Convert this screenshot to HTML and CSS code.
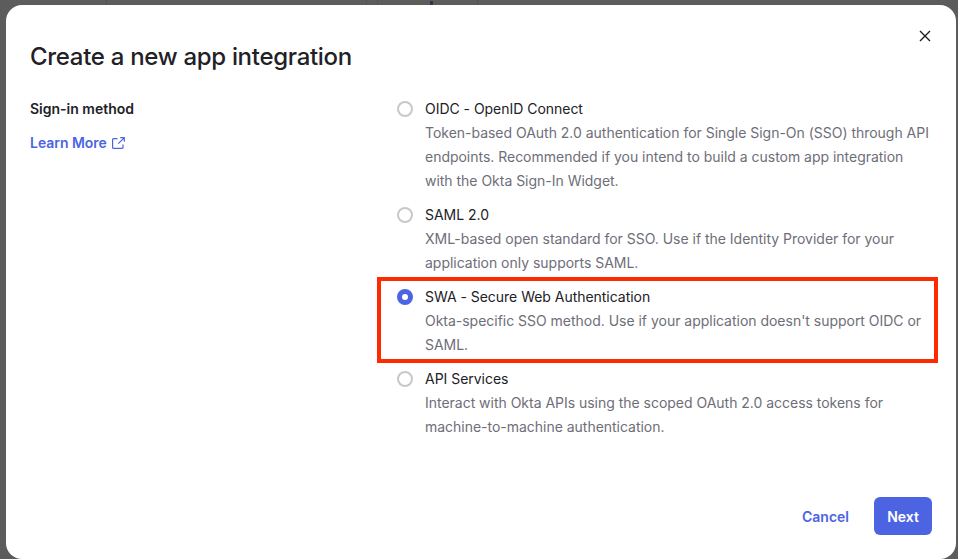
FILE: index.html
```html
<!DOCTYPE html>
<html lang="en">
<head>
<meta charset="utf-8">
<title>Create a new app integration</title>
<link rel="stylesheet" href="styles.css">
</head>
<body>
<div class="overlay">
  <div class="modal">
    <header class="modal-head">
      <h1 class="title">Create a new app integration</h1>
      <button class="close" aria-label="Close">
        <svg width="12" height="12" viewBox="0 0 12 12"><path d="M1 1l10 10M11 1L1 11" stroke="#1d1d21" stroke-width="1.4" fill="none"/></svg>
      </button>
    </header>
    <div class="modal-body">
      <div class="side">
        <div class="side-label">Sign-in method</div>
        <a class="learn">Learn More
          <svg class="ext" width="13" height="12" viewBox="0 0 13 12" fill="none" stroke="#4c64e1" stroke-width="1.2"><path d="M5.5 1.6H1.6a1 1 0 0 0-1 1v7.8a1 1 0 0 0 1 1h8.4a1 1 0 0 0 1-1V7.5"/><path d="M8.2 .7h4.1v4.1M12.3 .7L6.3 6.7"/></svg>
        </a>
      </div>
      <div class="options">
        <div class="option">
          <span class="radio"></span>
          <div>
            <div class="opt-title">OIDC - OpenID Connect</div>
            <div class="opt-desc">Token-based OAuth 2.0 authentication for Single Sign-On (SSO) through API<br>endpoints. Recommended if you intend to build a custom app integration<br>with the Okta Sign-In Widget.</div>
          </div>
        </div>
        <div class="option">
          <span class="radio"></span>
          <div>
            <div class="opt-title">SAML 2.0</div>
            <div class="opt-desc">XML-based open standard for SSO. Use if the Identity Provider for your<br>application only supports SAML.</div>
          </div>
        </div>
        <div class="option">
          <span class="radio selected"></span>
          <div>
            <div class="opt-title">SWA - Secure Web Authentication</div>
            <div class="opt-desc">Okta-specific SSO method. Use if your application doesn't support OIDC or<br>SAML.</div>
          </div>
          <span class="highlight"></span>
        </div>
        <div class="option">
          <span class="radio"></span>
          <div>
            <div class="opt-title">API Services</div>
            <div class="opt-desc">Interact with Okta APIs using the scoped OAuth 2.0 access tokens for<br>machine-to-machine authentication.</div>
          </div>
        </div>
      </div>
    </div>
    <footer class="modal-foot">
      <a class="cancel">Cancel</a>
      <button class="next">Next</button>
    </footer>
  </div>
</div>
</body>
</html>
```
FILE: styles.css
```css
* { box-sizing: border-box; }
html, body { margin: 0; height: 100%; }
body {
  background-color: #5c5c5c;
  background-image:
    linear-gradient(#525252, #525252),
    linear-gradient(#525252, #525252),
    linear-gradient(#525252, #525252),
    linear-gradient(#525252, #525252),
    linear-gradient(#2f3548, #2f3548);
  background-size: 1px 5px, 1px 5px, 1px 5px, 1px 5px, 3px 4px;
  background-position: 106px 0, 366px 0, 377px 0, 477px 0, 430px 1px;
  background-repeat: no-repeat;
  font-family: Inter, "Liberation Sans", sans-serif;
  overflow: hidden;
}
.overlay {
  height: 559px;
  padding: 5px 2px 0 6px;
  display: flex;
}
.modal {
  flex: 1;
  background: #fff;
  border-radius: 16px;
  padding: 0 24px;
  display: flex;
  flex-direction: column;
}
.modal-head {
  display: flex;
  justify-content: space-between;
  padding-top: 36px;
  height: 80px;
}
.title {
  margin: 0;
  font-size: 24px;
  line-height: 32px;
  font-weight: 500;
  letter-spacing: -0.3px;
  color: #212126;
}
.close {
  border: 0;
  background: none;
  padding: 0;
  width: 12px;
  height: 12px;
  margin-top: -11px;
  margin-right: 1px;
  display: flex;
}
.modal-body { display: flex; flex: 1; }
.side { width: 367px; padding-top: 12px; }
.side-label {
  font-size: 14px;
  line-height: 24px;
  font-weight: 600;
  color: #212126;
}
.learn {
  display: flex;
  align-items: center;
  gap: 5px;
  margin-top: 10px;
  font-size: 14px;
  line-height: 24px;
  font-weight: 600;
  letter-spacing: -0.03px;
  color: #4c64e1;
}
.options { flex: 1; padding-top: 12px; display: flex; flex-direction: column; gap: 10px; }
.option { display: flex; gap: 12px; position: relative; }
.radio {
  flex: none;
  width: 16px;
  height: 16px;
  margin-top: 4px;
  border: 2px solid #c8c8c8;
  border-radius: 50%;
  background: #fff;
}
.radio.selected {
  border: 5px solid #4c64e1;
}
.opt-title {
  font-size: 14px;
  line-height: 24px;
  letter-spacing: -0.03px;
  color: #212126;
}
.opt-desc {
  font-size: 14px;
  line-height: 24px;
  letter-spacing: -0.02px;
  color: #6e6e78;
  white-space: nowrap;
}
.highlight {
  position: absolute;
  left: -20px;
  top: -8px;
  width: 561px;
  height: 86px;
  border: 4px solid #ff2a00;
}
.modal-foot {
  display: flex;
  justify-content: flex-end;
  align-items: center;
  gap: 25px;
  padding-bottom: 24px;
}
.cancel {
  font-size: 14px;
  font-weight: 600;
  color: #4c64e1;
}
.next {
  width: 58px;
  height: 38px;
  border: 0;
  border-radius: 6px;
  background: #4c64e1;
  color: #fff;
  font: 600 14px Inter, "Liberation Sans", sans-serif;
}
```
